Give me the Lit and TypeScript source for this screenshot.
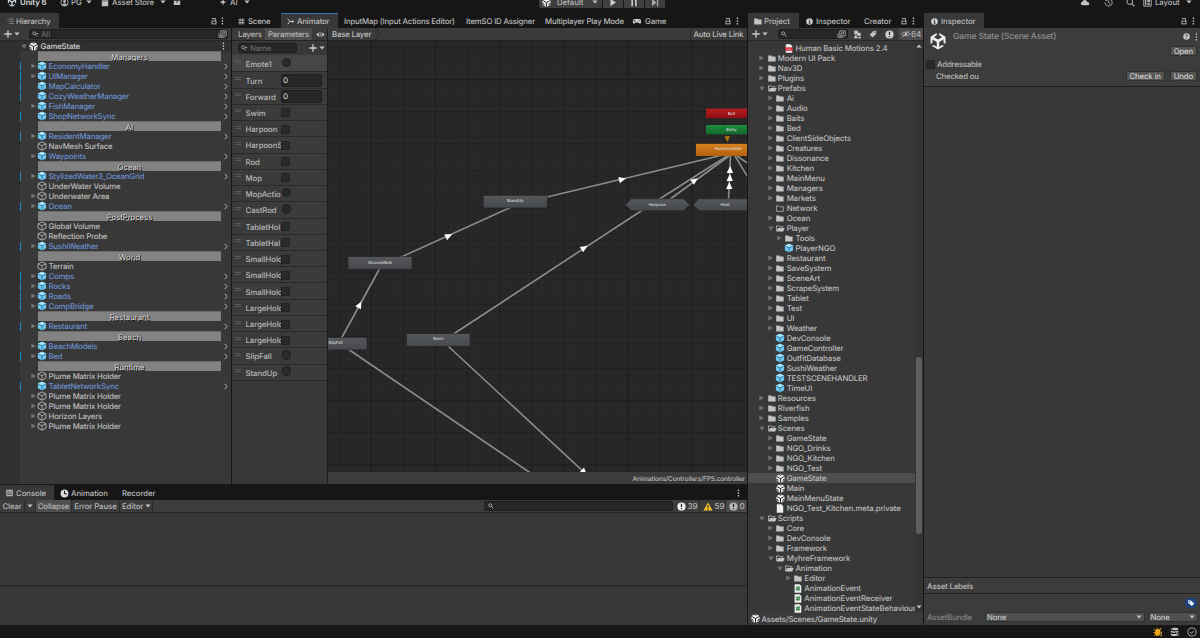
import { LitElement, html, svg, css, nothing } from "lit";
import { customElement } from "lit/decorators.js";

// ---------- icons ----------
const icon = (w: number, h: number, vb: string, body: unknown) =>
  html`<svg width=${w} height=${h} viewBox=${vb} fill="none">${body}</svg>`;

const caret = () => icon(6, 4, "0 0 6 4", svg`<path d="M0.4 0.4H5.6L3 3.5Z" fill="#c4c4c4"/>`);
const arrowR = () => icon(5, 6, "0 0 5 6", svg`<path d="M0.3 0.4L4.9 3L0.3 5.6Z" fill="#747474"/>`);
const arrowD = () => icon(6, 5, "0 0 6 5", svg`<path d="M0.2 0.5H5.8L3 4.9Z" fill="#6e6e6e"/>`);
const chevron = () => icon(4, 7, "0 0 4 7", svg`<path d="M0.7 0.8L3.2 3.5L0.7 6.2" stroke="#b4b4b4" stroke-width="1"/>`);
const dots = () => icon(3, 8, "0 0 3 8", svg`<path d="M0.8 0.6h1.3v1.4h-1.3zM0.8 3.3h1.3v1.4h-1.3zM0.8 6h1.3v1.4h-1.3z" fill="#c8c8c8"/>`);
const lock = () => icon(6, 8, "0 0 6 8", svg`<path d="M1.1 2.2V1.5H4.5V3.8" stroke="#b8b8b8" stroke-width="0.9"/><rect x="1" y="4" width="4" height="2.9" stroke="#b8b8b8" stroke-width="0.9"/>`);
const plus = () => icon(8, 8, "0 0 8 8", svg`<path d="M4 0.3V7.7M0.3 4H7.7" stroke="#cccccc" stroke-width="1.3"/>`);
const lens = () => icon(6, 6, "0 0 6 6", svg`<circle cx="2.3" cy="2.3" r="1.5" stroke="#b0b0b0" stroke-width="0.9"/><path d="M3.5 3.5L5.4 5.4" stroke="#b0b0b0" stroke-width="1"/>`);
const lensMenu = () => icon(7, 6, "0 0 7 6", svg`<circle cx="2.1" cy="2.3" r="1.4" stroke="#aaa" stroke-width="0.8"/><path d="M3.2 3.4L5 5.2" stroke="#aaa" stroke-width="0.9"/><path d="M3.9 1.9H6.5L5.2 3.4Z" fill="#aaa"/>`);
const popOut = () => icon(9, 8, "0 0 9 8", svg`<path d="M1 3.2V7.3H6.3M2.8 0.8H8.2V6H2.8Z" stroke="#b4b4b4" stroke-width="0.8"/><circle cx="5.6" cy="3.1" r="1.1" stroke="#b4b4b4" stroke-width="0.7"/><path d="M4.7 4L2.6 6" stroke="#b4b4b4" stroke-width="0.8"/>`);
const prefab = () => icon(10, 10, "0 0 10 10", svg`<path d="M5 0.7L9.1 2.6V7.3L5 9.4L0.9 7.3V2.6Z" fill="#6ccaf5"/><path d="M5 0.7L9.1 2.6L5 4.6L0.9 2.6Z" fill="#a8e6fd"/><path d="M1.3 3.1L5 4.9L8.7 3.1M5 4.9V9" stroke="#2f6684" stroke-width="0.8"/>`);
const cube = () => icon(10, 10, "0 0 10 10", svg`<path d="M5 0.9L8.9 2.8V7.2L5 9.2L1.1 7.2V2.8Z" stroke="#b9b9b9" stroke-width="0.9" stroke-linejoin="round"/><path d="M1.3 2.9L5 4.7L8.7 2.9M5 4.7V9" stroke="#b9b9b9" stroke-width="0.8"/>`);
const unity = (s: number, c = "#ededed") => icon(s, s, "0 0 20 20", svg`
  <path d="M8.6 1.2L1.7 5.2V13.2L3.9 12V8.2L8.6 11V16.3L5.3 14.4L3.3 15.6L10 19.4L16.7 15.6L14.7 14.4L11.4 16.3V11L16.1 8.2V12L18.3 13.2V5.2L11.4 1.2V3.7L14.7 5.6L10 8.4L5.3 5.6L8.6 3.7Z" fill=${c}/>`);
const sceneIcon = (s = 9) => icon(s, s, "0 0 9 9", svg`<circle cx="4.5" cy="4.5" r="4.1" fill="#f0f0f0"/><path d="M4.5 4.6V8.6M4.5 4.6L1.2 2.7M4.5 4.6L7.8 2.7" stroke="#262626" stroke-width="1"/><path d="M3.4 0.4L4.5 1.7L5.6 0.4M0.4 5.5L2 5.7L2 7.6M8.6 5.5L7 5.7L7 7.6" stroke="#262626" stroke-width="0.8"/>`);
const folder = () => icon(8, 7, "0 0 8 7", svg`<path d="M0.2 0.5H3.2L4.1 1.5H7.6V6.6H0.2Z" fill="#c4c4c4"/>`);
const folderEmpty = () => icon(8, 7, "0 0 8 7", svg`<path d="M0.6 0.8H3.1L4 1.8H7.3V6.3H0.6Z" stroke="#b4b4b4" stroke-width="0.8"/>`);
const folderOpen = () => icon(9, 7, "0 0 9 7", svg`<path d="M0.6 6V0.8H2.9L3.8 1.7H6.9V2.8" stroke="#c4c4c4" stroke-width="0.8"/><path d="M0.4 6.6L2 2.9H8.7L7.2 6.6Z" fill="#c4c4c4"/>`);
const csFile = () => icon(8, 9, "0 0 8 9", svg`<path d="M0.6 0.2H5.6L7.3 1.9V8.8H0.6Z" fill="#eeeeee"/><path d="M3.4 2.2L2.9 7M5.2 2.2L4.7 7M1.9 3.8H6M1.8 5.4H5.9" stroke="#2e7d44" stroke-width="0.9"/>`);
const plainFile = () => icon(8, 9, "0 0 8 9", svg`<path d="M0.8 0.3H5.3L7.2 2.1V8.7H0.8Z" fill="#f0f0f0"/>`);
const pdfFile = () => icon(8, 9, "0 0 8 9", svg`<path d="M0.8 0.3H5.3L7.2 2.1V8.7H0.8Z" fill="#f0f0f0"/><rect x="0.3" y="3.4" width="7.3" height="3.4" fill="#d0202c"/><path d="M1.5 5.2H6.4" stroke="#f3b5b8" stroke-width="0.8"/>`);
const listIcon = () => icon(7, 7, "0 0 7 7", svg`<path d="M0.4 1.1H1.4M2.2 1.1H6.7M1.5 3.3H2.4M3.1 3.3H6.7M1.5 5.5H2.4M3.1 5.5H6.7" stroke="#9a9a9a" stroke-width="0.8"/>`);
const hashIcon = () => icon(7, 7, "0 0 7 7", svg`<path d="M2.1 0.4V6.6M4.7 0.4V6.6M0.3 2.1H6.6M0.3 4.8H6.6" stroke="#b4b4b4" stroke-width="1"/>`);
const animatorIcon = () => icon(8, 7, "0 0 8 7", svg`<path d="M0.8 0.8L2.8 3.5L0.8 6.2M2.6 3.5H6.6" stroke="#c4c4c4" stroke-width="1"/><path d="M5 2L7.4 3.5L5 5Z" fill="#c4c4c4"/>`);
const gameIcon = () => icon(10, 7, "0 0 10 7", svg`<path d="M2.5 1H7.5C9.4 1 9.6 5.6 8 5.6C7.1 5.6 6.8 4.5 6.2 4.5H3.8C3.2 4.5 2.9 5.6 2 5.6C0.4 5.6 0.6 1 2.5 1Z" fill="#d4d4d4"/><path d="M2.8 1.9V3.7M1.9 2.8H3.7M6.3 2.8H8" stroke="#222" stroke-width="0.7"/>`);
const info = (s = 7) => icon(s, s, "0 0 8 8", svg`<circle cx="4" cy="4" r="3.7" fill="#d2d2d2"/><path d="M4 1.5V2.5M3.2 3.4H4.2V6H3.1M4 6H5" stroke="#222" stroke-width="1"/>`);
const bang = (s: number, c: string) => icon(s, s, "0 0 9 9", svg`<circle cx="4.5" cy="4.5" r="4.1" fill=${c}/><path d="M4.5 1.7V5.1M4.5 6V7.3" stroke="#2a2a2a" stroke-width="1.3"/>`);
const eye = () => icon(9, 7, "0 0 9 7", svg`<path d="M0.4 3.5C2 0.7 7 0.7 8.6 3.5C7 6.3 2 6.3 0.4 3.5Z" fill="#c8c8c8"/><circle cx="4.5" cy="3.5" r="1.7" fill="#3a3a3a"/><circle cx="4.5" cy="3.5" r="0.8" fill="#c8c8c8"/>`);
const eyeOff = () => icon(10, 8, "0 0 10 8", svg`<path d="M0.7 4C2.2 1.7 7.6 1.5 9 4C7.6 6.3 2.2 6.3 0.7 4Z" stroke="#b6b6b6" stroke-width="0.9"/><circle cx="4.9" cy="4" r="1.3" fill="#b6b6b6"/><path d="M1.5 7.2L8 0.7" stroke="#b6b6b6" stroke-width="1"/>`);
const shapes = () => icon(9, 9, "0 0 9 9", svg`<rect x="1.2" y="0.6" width="3.8" height="3.6" fill="#c4c4c4"/><circle cx="6" cy="4.3" r="1.9" fill="#c4c4c4"/><path d="M2.8 4.2L5 8.3H0.7Z" fill="#c4c4c4"/><path d="M5.2 6.9H8V8.4H5.2Z" fill="#c4c4c4"/>`);
const tag = (c: string) => icon(8, 8, "0 0 8 8", svg`<path d="M7.3 0.8L7.2 3.9L3.5 7.5L0.7 4.7L4.3 1Z" fill=${c}/><circle cx="5.9" cy="2.2" r="0.6" fill="#3a3a3a"/>`);
const blueTag = () => icon(12, 10, "0 0 12 10", svg`<rect x="0" y="0" width="12" height="10" rx="4.6" fill="#1d427c"/><path d="M2.9 2.3L5.9 2.4L9.3 5.6L6.9 7.9L3.3 4.9Z" fill="#e6edf8"/><circle cx="4.5" cy="3.8" r="0.6" fill="#1d427c"/>`);
const warn = () => icon(10, 9, "0 0 10 9", svg`<path d="M5 0.4L9.6 8.6H0.4Z" fill="#f5c12c"/><path d="M5 3V6M5 6.8V7.9" stroke="#30280c" stroke-width="1.1"/>`);
const consoleIcon = () => icon(7, 8, "0 0 7 8", svg`<rect x="0.3" y="0.7" width="6.4" height="6.6" rx="0.6" fill="#bdbdbd"/><path d="M1.2 2.4H3.4M1.2 4H5.8M1.2 5.6H5.8M4.4 2.4H5.8" stroke="#383838" stroke-width="0.8"/>`);
const clock = () => icon(9, 9, "0 0 9 9", svg`<circle cx="4.5" cy="4.5" r="3.9" fill="#d8d8d8"/><path d="M4.5 1.8V4.8H6.8" stroke="#1a1a1a" stroke-width="1"/>`);
const help = () => icon(7, 7, "0 0 8 8", svg`<circle cx="4" cy="4" r="3.7" fill="#c8c8c8"/><path d="M2.9 3.1C3 1.6 5.2 1.7 5.1 3.1C5 3.9 4 3.9 4 4.9M4 5.5V6.4" stroke="#333" stroke-width="0.9"/>`);
const userIcon = () => icon(9, 9, "0 0 9 9", svg`<circle cx="4.5" cy="4.5" r="3.7" stroke="#b8b8b8" stroke-width="0.9"/><circle cx="4.5" cy="3.5" r="1.4" fill="#b8b8b8"/><path d="M2.1 6.8C2.8 5.1 6.2 5.1 6.9 6.8L4.5 8Z" fill="#b8b8b8"/>`);
const storeIcon = () => icon(8, 10, "0 0 8 10", svg`<path d="M0.8 2.6H7.2V9.2H0.8Z" fill="#c0c0c0"/><path d="M0.8 3.9H7.2" stroke="#222" stroke-width="0.6"/>`);
const boxIcon = () => icon(8, 8, "0 0 8 8", svg`<rect x="0.8" y="0.5" width="6.4" height="6.5" rx="0.6" fill="#c0c0c0"/><path d="M0.8 2.4H7.2M3 3.8H5" stroke="#222" stroke-width="0.9"/>`);
const sparkle = () => icon(8, 8, "0 0 8 8", svg`<path d="M4 0.8L4.8 3.3L7.4 4.1L4.8 4.9L4 7.4L3.2 4.9L0.6 4.1L3.2 3.3Z" fill="#c8c8c8"/>`);
const cloud = () => icon(10, 8, "0 0 10 8", svg`<path d="M2.6 7.2C0.3 7.2 0.2 4.3 2.3 4.1C2.4 1.5 6.6 1.2 7.2 3.9C9.9 3.8 10 7.2 7.6 7.2Z" fill="#c4c4c4"/>`);
const history = () => icon(9, 9, "0 0 9 9", svg`<path d="M1 4.5A3.6 3.6 0 1 0 2.2 1.8M1.1 0.9L1.7 2.6L3.4 2.3M4.6 2.5V4.8L6.2 5.7" stroke="#b8b8b8" stroke-width="0.9"/>`);
const bigLens = () => icon(9, 9, "0 0 9 9", svg`<circle cx="3.8" cy="3.6" r="2.8" stroke="#b8b8b8" stroke-width="1"/><path d="M5.8 5.7L8.4 8.4" stroke="#b8b8b8" stroke-width="1.2"/>`);
const layoutIcon = () => icon(9, 9, "0 0 9 9", svg`<path d="M0.8 0.8H8.2V8.2H0.8Z" stroke="#b8b8b8" stroke-width="0.9"/><path d="M2.1 2H3.4V7H2.1ZM4.4 2H6.9V4.2H4.4ZM4.4 5.2H6.9V7H4.4Z" fill="#b8b8b8"/>`);
const play = () => icon(8, 9, "0 0 8 9", svg`<path d="M1.4 0.8L7 4.5L1.4 8.2Z" fill="#c6c6c6"/>`);
const pause = () => icon(8, 9, "0 0 8 9", svg`<path d="M1.3 0.6H3V8.3H1.3ZM5 0.6H6.7V8.3H5Z" fill="#c6c6c6"/>`);
const step = () => icon(8, 9, "0 0 8 9", svg`<path d="M1 0.8L5.6 4.5L1 8.2ZM5.9 0.8H7.2V8.2H5.9Z" fill="#a8a8a8"/>`);
const bug = () => icon(10, 10, "0 0 10 10", svg`<path d="M2.5 3.4C3 1.6 5.3 1.8 5.9 2.6L7.8 0.9L8.4 1.6L7.3 3.3L6.6 8.6L3.4 9L2 6.8Z" fill="#f0a818"/><path d="M0.8 2.2L3 4.2M0.4 5.6H3M1 8.8L3.1 7M4 0.7L4.6 2.4" stroke="#f0a818" stroke-width="0.9"/><path d="M8.1 4.4V7.4M8.1 8.1V9.2" stroke="#f6d060" stroke-width="1.1"/>`);
const dbIcon = () => icon(10, 10, "0 0 10 10", svg`<ellipse cx="4.6" cy="2" rx="3.8" ry="1.3" fill="#c6c6c6"/><path d="M0.8 3.4C2 4.6 7.2 4.6 8.4 3.4V5C7.2 6.2 2 6.2 0.8 5ZM0.8 6.2C2 7.4 7.2 7.4 8.4 6.2V8C7.2 9.4 2 9.4 0.8 8Z" fill="#c6c6c6"/><path d="M5.5 5L9 8.8" stroke="#c6c6c6" stroke-width="1"/><path d="M1 1L8.8 9" stroke="#191919" stroke-width="0.7"/>`);
const okIcon = () => icon(10, 10, "0 0 10 10", svg`<circle cx="5" cy="5" r="4.1" stroke="#b0b0b0" stroke-width="0.9"/><path d="M3 5L4.5 6.4L7 3.7" stroke="#b0b0b0" stroke-width="1"/>`);

const base = css`
  :host { display: block; min-width: 0; min-height: 0; }
  * { box-sizing: border-box; }
  svg { display: block; flex: none; }
  .row { display: flex; align-items: center; }
  .grow { flex: 1; min-width: 0; }
  .tabs { height: 15px; background: #161616; display: grid; align-items: stretch; }
  .tab { display: flex; align-items: center; gap: 3px; padding: 1px 0 0 7px; overflow: visible; white-space: nowrap; color: #bababa; }
  .tab.on { background: #383838; }
  .field { background: #262626; border: 1px solid #1e1e1e; border-radius: 2px; display: flex; align-items: center; }
`;

// ---------- top toolbar ----------
@customElement("main-toolbar")
class MainToolbar extends LitElement {
  static styles = [base, css`
    :host { height: 13px; overflow: hidden; background: #161616; color: #b8b8b8; letter-spacing: -0.08px; }
    .bar { height: 16px; margin-top: -6px; display: grid; align-items: center;
      grid-template-columns: 7px 53px 41px 72px 46px 276px 44px 63px 1px 20px 1px 20px 1px 20px 415px 24px 22px 17px 12px 1fr; }
    .bar > * { display: flex; align-items: center; gap: 3px; white-space: nowrap; }
    .ver { color: #dedede; font-weight: 600; gap: 3px; }
    .btn { height: 12px; background: #3f3f3f; justify-content: center; }
    .first { padding-left: 3px; border-radius: 2px; justify-content: flex-start; }
    .user { gap: 2px; }
    .def { width: 32px; padding-left: 3px; }
  `];
  render() {
    return html`<div class="bar">
      <span></span>
      <span class="ver">${unity(10, "#c9d3dc")}Unity 6</span>
      <span class="user">${userIcon()}PG<span></span>${caret()}</span>
      <span>${storeIcon()}Asset Store<span></span>${caret()}</span>
      <span>${boxIcon()}</span>
      <span>${sparkle()}AI<span></span>${caret()}</span>
      <span></span>
      <span class="btn first">${sceneIcon(9)}<span class="def">Default</span><span></span>${caret()}</span>
      <span></span><span class="btn">${play()}</span>
      <span></span><span class="btn">${pause()}</span>
      <span></span><span class="btn">${step()}</span>
      <span></span>
      <span>${cloud()}</span><span>${history()}</span><span>${bigLens()}</span>
      <span>${layoutIcon()}</span><span>Layout<span></span>${caret()}</span>
    </div>`;
  }
}

// ---------- hierarchy ----------
type HRow = { n: string; k: "sep" | "pre" | "obj"; a?: boolean; m?: boolean };
const sep = (n: string): HRow => ({ n, k: "sep" });
const pre = (n: string, a = true, m = true): HRow => ({ n, k: "pre", a, m });
const obj = (n: string, a = false): HRow => ({ n, k: "obj", a });
const hierarchy: HRow[] = [
  sep("Managers"), pre("EconomyHandler"), pre("UIManager"), pre("MapCalculator", false), pre("CozyWeatherManager", false),
  pre("FishManager", true, false), pre("ShopNetworkSync", false),
  sep("AI"), pre("ResidentManager"), obj("NavMesh Surface"), pre("Waypoints", true, false),
  sep("Ocean"), pre("StylizedWater3_OceanGrid"), obj("UnderWater Volume"), obj("Underwater Area", true), pre("Ocean"),
  sep("PostProcess"), obj("Global Volume"), obj("Reflection Probe"), pre("SushiWeather"),
  sep("World"), obj("Terrain"), pre("Comps"), pre("Rocks"), pre("Roads"), pre("CompBridge"),
  sep("Restaurant"), pre("Restaurant"),
  sep("Beach"), pre("BeachModels", true, false), pre("Bed"),
  sep("Runtime"), obj("Plume Matrix Holder", true), pre("TabletNetworkSync", false), obj("Plume Matrix Holder", true),
  obj("Plume Matrix Holder", true), obj("Horizon Layers", true), obj("Plume Matrix Holder", true),
];

@customElement("hierarchy-panel")
class HierarchyPanel extends LitElement {
  static styles = [base, css`
    :host { background: #383838; display: flex; flex-direction: column; }
    .tabs { grid-template-columns: 59px 1fr 10px 10px; }
    .tabs .on { gap: 2px; }
    .tool { height: 13px; padding: 0 3px 0 4px; gap: 2px; background: #3a3a3a; border-bottom: 1px solid #282828; }
    .tool .field { height: 10px; flex: 1; margin-left: 7px; padding-left: 2px; gap: 2px; color: #686868; }
    .body { flex: 1; background: linear-gradient(to right, #303030 0 20px, #383838 20px); }
    .line { height: 10px; display: grid; grid-template-columns: 20px 10px 7px 11px 1fr 7px; align-items: center; }
    .line > * { white-space: nowrap; }
    .mark { grid-column: 1; justify-self: end; width: 1px; height: 9px; margin-right: -1px; background: #1e88c4; }
    .arr { grid-column: 3; margin-left: 0.5px; }
    .ic { grid-column: 4; }
    .nm { grid-column: 5; margin-left: 0.5px; }
    .go { grid-column: 6; }
    .pre .nm { color: #6c8fce; }
    .line.root { grid-template-columns: 21px 8px 11.5px 1fr 9px; background: #2f2f2f; color: #cecece; }
    .sep { height: 10px; margin: 0 10px 0 38px; background: #828282; border-top: 1px solid #6b6b6b; text-align: center; line-height: 11px; overflow: hidden; color: #dadada; letter-spacing: -0.08px; text-shadow: 0.8px 0.8px 0.3px #0a0a0a, 0.4px 0.4px 0.4px #0a0a0a; }
  `];
  render() {
    return html`
      <div class="tabs"><div class="tab on">${listIcon()}Hierarchy</div><span></span><div class="row">${lock()}</div><div class="row">${dots()}</div></div>
      <div class="tool row">${plus()}${caret()}<div class="field">${lensMenu()}All<span class="grow"></span>${popOut()}</div></div>
      <div class="body">
        <div class="line root"><span></span>${arrowD()}${sceneIcon()}<span>GameState</span>${dots()}</div>
        ${hierarchy.map((r) => r.k === "sep"
          ? html`<div class="sep">${r.n}</div>`
          : html`<div class="line ${r.k}">
              ${r.m ? html`<span class="mark"></span>` : nothing}
              ${r.a ? html`<span class="arr">${arrowR()}</span>` : nothing}
              <span class="ic">${r.k === "pre" ? prefab() : cube()}</span><span class="nm">${r.n}</span>
              ${r.k === "pre" ? html`<span class="go">${chevron()}</span>` : nothing}
            </div>`)}
      </div>`;
  }
}

// ---------- animator ----------
const params: [string, "t" | "f" | "b"][] = [
  ["Emote1", "t"], ["Turn", "f"], ["Forward", "f"], ["Swim", "b"], ["Harpoon", "b"], ["HarpoonS", "b"], ["Rod", "b"], ["Mop", "b"],
  ["MopActio", "t"], ["CastRod", "t"], ["TabletHol", "b"], ["TabletHal", "b"], ["SmallHolc", "b"], ["SmallHolc", "b"], ["SmallHolc", "b"],
  ["LargeHolc", "b"], ["LargeHolc", "b"], ["LargeHolc", "b"], ["SlipFall", "t"], ["StandUp", "t"],
];
// Transitions in window coordinates: x1, y1, x2, y2.
const links = [
  [341, 339, 380, 268], [399, 258, 516, 205], [547, 197, 727, 154], [452, 335, 644, 209],
  [658, 200, 727, 156], [669, 200, 729, 156], [728.5, 200, 730.5, 156], [735, 156, 752, 184], [737, 156, 752, 166],
  [348, 349, 532, 474], [448, 346, 586, 474],
];
const heads = [[359.5, 305, -62], [448.5, 236, -24], [622, 179.5, -13], [584, 248, -33], [694.5, 180.5, -36], [730, 170, -88], [729.8, 178, -88], [729.3, 186, -88], [584, 472, 43]];

@customElement("animator-panel")
class AnimatorPanel extends LitElement {
  static styles = [base, css`
    :host { background: #383838; display: flex; flex-direction: column; }
    .tabs { grid-template-columns: 49px 57px 128px 79px 81px 99px 10.5px 10px; }
    .tabs .on { border-top: 1px solid #3a79bb; padding-top: 0; gap: 2px; }
    .tabs .flush { padding-left: 6px; }
    .tabs .after { padding-left: 0; }
    .split { flex: 1; display: grid; grid-template-columns: 95px 1fr; min-height: 0; }
    .side { border-right: 1px solid #1d1d1d; width: 96px; }
    .sub { height: 13px; background: #3a3a3a; border-bottom: 1px solid #242424; color: #b8b8b8; }
    .sub .lay { width: 33px; padding-left: 6px; }
    .sub .par { width: 47px; height: 12px; background: #4d4d4d; justify-content: center; margin-right: 3.5px; }
    .find { height: 14px; padding-left: 6px; }
    .find .field { width: 59px; height: 10px; gap: 2px; padding-left: 2px; color: #666; margin-right: 12px; }
    .p { height: 16.24px; padding-top: 1px; border-bottom: 1px solid #2a2a2a; display: grid; grid-template-columns: 13.5px 35px 1fr; align-items: center; color: #b8b8b8; background: #3b3b3b; }
    .p.first { background: #464646; height: 17.4px; padding-top: 1.6px; }
    .grip { width: 5.5px; height: 3px; margin: -4px 0 0 3px; border-top: 1px solid #5a5a5a; border-bottom: 1px solid #5a5a5a; }
    .lbl { overflow: hidden; white-space: nowrap; letter-spacing: -0.06px; }
    .bool { width: 9px; height: 9px; background: #2a2a2a; border: 1px solid #222; border-radius: 1px; margin-left: 0.5px; }
    .trig { width: 9.5px; height: 9.5px; border-radius: 50%; background: #2a2a2a; border: 1px solid #1f1f1f; margin: -3px 0 0 1px; }
    .num { height: 13px; margin: -1px 5px 0 0; padding-left: 1.5px; color: #c4c4c4; }
    .graph { display: flex; flex-direction: column; min-width: 0; margin-left: 1px; }
    .crumb { height: 13px; background: #3a3a3a; border-bottom: 1px solid #242424; color: #c0c0c0; padding-left: 4px; gap: 3px; }
    .live { border-left: 1px solid #2a2a2a; padding-left: 2.5px; width: 57px; height: 12px; white-space: nowrap; }
    .canvas { flex: 1; min-height: 0; overflow: hidden; background: #282828; }
    .foot { height: 12px; background: #3c3c3c; justify-content: flex-end; padding: 1px 2px 0 0; font-size: 6.5px; font-weight: 500; color: #bcbcbc; letter-spacing: -0.14px; }
    .canvas text { font-size: 4.1px; font-weight: 500; fill: #dcdcdc; text-anchor: middle; letter-spacing: 0; }
  `];
  node(x: number, y: number, w: number, label: string, f = "url(#gray)") {
    return svg`<rect x=${x} y=${y} width=${w} height="12.6" fill=${f} stroke="#1e1e1e" stroke-width="0.5"/><text x=${x + w / 2} y=${y + 6.8}>${label}</text>`;
  }
  hex(x: number, label: string) {
    return svg`<path d="M${x} 204.7L${x + 6} 198.7H${x + 58}L${x + 64.5} 204.7L${x + 58} 210.8H${x + 6}Z" fill="url(#gray)" stroke="#1e1e1e" stroke-width="0.5"/><text x=${x + 32} y="206.4">${label}</text>`;
  }
  render() {
    return html`
      <div class="tabs">
        <div class="tab flush">${hashIcon()}Scene</div><div class="tab on flush">${animatorIcon()}Animator</div>
        <div class="tab flush">InputMap (Input Actions Editor)</div><div class="tab after">ItemSO ID Assigner</div>
        <div class="tab after">Multiplayer Play Mode</div><div class="tab flush">${gameIcon()}Game</div>
        <div class="row">${lock()}</div><div class="row">${dots()}</div>
      </div>
      <div class="split">
        <div class="side">
          <div class="sub row"><span class="lay">Layers</span><span class="par row">Parameters</span>${eye()}</div>
          <div class="find row"><div class="field">${lensMenu()}Name</div>${plus()}<span style="width:2px"></span>${caret()}</div>
          <div class="list">
            ${params.map(([n, k], i) => html`<div class="p ${i ? "" : "first"}"><span class="grip"></span><span class="lbl">${n}</span>
              ${k === "b" ? html`<span class="bool"></span>` : k === "t" ? html`<span class="trig"></span>` : html`<span class="num field">0</span>`}</div>`)}
          </div>
        </div>
        <div class="graph">
          <div class="crumb row"><span>Base Layer</span>${icon(8, 12, "0 0 8 12", svg`<path d="M1 0L6 6L1 12" stroke="#2a2a2a" stroke-width="1"/>`)}<span class="grow"></span><span class="live row">Auto Live Link</span></div>
          <div class="canvas"><svg width="419" height="431" viewBox="328 41 419 431">
            <defs>
              <pattern id="minor" x="370.8" y="47.3" width="6.42" height="6.42" patternUnits="userSpaceOnUse"><path d="M0 0.4H6.42M0.4 0V6.42" stroke="#232323" stroke-width="0.7"/></pattern>
              <pattern id="major" x="370.6" y="46.9" width="64.2" height="32.1" patternUnits="userSpaceOnUse"><path d="M0 0.5H64.2" stroke="#1e1e1e" stroke-width="0.9"/><path d="M0.6 0V32.1" stroke="#1a1a1a" stroke-width="1"/><path d="M32.6 0V32.1" stroke="#202020" stroke-width="0.8"/></pattern>
              <linearGradient id="gray" x2="0" y2="1"><stop stop-color="#55575b"/><stop offset="1" stop-color="#45484c"/></linearGradient>
              <linearGradient id="red" x2="0" y2="1"><stop stop-color="#b81c20"/><stop offset="1" stop-color="#8e1014"/></linearGradient>
              <linearGradient id="green" x2="0" y2="1"><stop stop-color="#1f8a40"/><stop offset="1" stop-color="#136a2c"/></linearGradient>
              <linearGradient id="orange" x2="0" y2="1"><stop stop-color="#d8811f"/><stop offset="1" stop-color="#b4600c"/></linearGradient>
            </defs>
            <rect x="328" y="41" width="419" height="431" fill="url(#minor)"/>
            <rect x="328" y="41" width="419" height="431" fill="url(#major)"/>
            ${links.map(([a, b, c, d]) => svg`<path d="M${a} ${b}L${c} ${d}" stroke="#8c8c8c" stroke-width="1.6"/>`)}
            ${heads.map(([x, y, r]) => svg`<path d="M-3 -3.2L4 0L-3 3.2Z" fill="#fff" transform="translate(${x} ${y}) rotate(${r})"/>`)}
            ${this.node(303, 337.3, 64, "")}<text x="335.5" y="344.1">SlipFall</text>
            ${this.node(406.5, 333.6, 63.5, "Swim")}
            ${this.node(348, 256.7, 64, "GroundWalk")}
            ${this.node(483.2, 195.3, 64, "StandUp")}
            ${this.hex(625.3, "Harpoon")}${this.hex(693, "Hold")}
            <rect x="706" y="108.6" width="50" height="9.6" fill="url(#red)"/><text x="731.5" y="115">Exit</text>
            <rect x="706" y="125" width="50" height="9.4" fill="url(#green)"/><text x="731.5" y="131.2">Entry</text>
            <path d="M724.5 136.3H730L727.4 142Z" fill="#b4780c"/>
            <rect x="696" y="143.8" width="64" height="12.2" fill="url(#orange)"/><text x="728.3" y="150.2">HumanoidIdle</text>
          </svg></div>
          <div class="foot row">Animations/Controllers/FPS.controller</div>
        </div>
      </div>`;
  }
}

// ---------- console ----------
@customElement("console-panel")
class ConsolePanel extends LitElement {
  static styles = [base, css`
    :host { background: #383838; border-top: 1px solid #161616; }
    .tabs { grid-template-columns: 54px 61px 622px 10px; letter-spacing: -0.08px; }
    .tabs .tight { padding-left: 6px; }
    .tabs .clk { gap: 2px; }
    .tool { height: 13px; background: #3c3c3c; border-bottom: 1px solid #262626; color: #b8b8b8; letter-spacing: -0.1px; }
    .tool > * { height: 12px; display: flex; align-items: center; white-space: nowrap; border-right: 1px solid #2c2c2c; }
    .clear { width: 25px; padding-left: 2.5px; }
    .drop { width: 11px; justify-content: center; }
    .col { width: 36px; background: #4f4f4f; justify-content: center; }
    .err { width: 48px; justify-content: center; }
    .ed { width: 33px; padding-left: 2px; gap: 1.5px; }
    .mid { flex: 1; border: 0; }
    .tool .field { width: 189px; height: 10px; padding-left: 3px; border: 1px solid #1e1e1e; }
    .n { padding-left: 3px; gap: 1.5px; font-size: 8.2px; }
    .n1 { width: 26px; margin-left: 1px; } .n2 { width: 26px; } .n3 { width: 20px; background: #4b4b4b; }
    .tool .n3 { border: 0; margin-right: 1px; }
    .log { height: 73px; border-bottom: 1px solid #2a2a2a; box-shadow: 0 1px 0 #303030; }
  `];
  render() {
    return html`
      <div class="tabs"><div class="tab on tight">${consoleIcon()}Console</div><div class="tab tight clk">${clock()}Animation</div><div class="tab">Recorder</div><div class="row">${dots()}</div></div>
      <div class="tool row"><span class="clear">Clear</span><span class="drop">${caret()}</span><span class="col">Collapse</span><span class="err">Error Pause</span><span class="ed">Editor${caret()}</span><span class="mid"></span>
        <span class="field">${lens()}</span><span class="n n1">${bang(9, "#f2f2f2")}39</span><span class="n n2">${warn()}59</span><span class="n n3">${bang(9, "#b8b8b8")}0</span></div>
      <div class="log"></div>`;
  }
}

// ---------- project ----------
// Depth, state ("c" closed, "o" open, "" leaf), icon kind, label.
type PRow = [number, string, string, string];
const f1 = (...n: string[]): PRow[] => n.map((x) => [1, "c", "f", x]);
const p1 = (...n: string[]): PRow[] => n.map((x) => [1, "", "p", x]);
const project: PRow[] = [
  [2, "", "pdf", "Human Basic Motions 2.4"], [0, "c", "f", "Modern UI Pack"], [0, "c", "f", "Nav3D"], [0, "c", "f", "Plugins"], [0, "o", "o", "Prefabs"],
  ...f1("Ai", "Audio", "Baits", "Bed", "ClientSideObjects", "Creatures", "Dissonance", "Kitchen", "MainMenu", "Managers", "Markets"),
  [1, "", "e", "Network"], ...f1("Ocean"), [1, "o", "o", "Player"], [2, "c", "f", "Tools"], [2, "", "p", "PlayerNGO"],
  ...f1("Restaurant", "SaveSystem", "SceneArt", "ScrapeSystem", "Tablet", "Test", "UI", "Weather"),
  ...p1("DevConsole", "GameController", "OutfitDatabase", "SushiWeather", "TESTSCENEHANDLER", "TimeUI"),
  [0, "c", "f", "Resources"], [0, "c", "f", "Riverfish"], [0, "c", "f", "Samples"], [0, "o", "o", "Scenes"],
  ...f1("GameState", "NGO_Drinks", "NGO_Kitchen", "NGO_Test"),
  [1, "sel", "s", "GameState"], [1, "", "s", "Main"], [1, "", "s", "MainMenuState"], [1, "", "d", "NGO_Test_Kitchen.meta.private"],
  [0, "o", "o", "Scripts"], ...f1("Core", "DevConsole", "Framework"), [1, "o", "o", "MyhreFramework"], [2, "o", "o", "Animation"], [3, "c", "f", "Editor"],
  [3, "", "cs", "AnimationEvent"], [3, "", "cs", "AnimationEventReceiver"], [3, "", "cs", "AnimationEventStateBehaviour"],
];
const kinds: Record<string, () => unknown> = { f: folder, o: folderOpen, e: folderEmpty, p: prefab, s: () => sceneIcon(9), d: plainFile, cs: csFile, pdf: pdfFile };

@customElement("project-panel")
class ProjectPanel extends LitElement {
  static styles = [base, css`
    :host { background: #383838; display: flex; flex-direction: column; }
    .tabs { grid-template-columns: 51px 58px 43.5px 11px 10px; letter-spacing: -0.08px; }
    .tabs .on { padding-left: 6px; gap: 2px; }
    .tool { height: 13px; background: #3a3a3a; border-bottom: 1px solid #282828; padding-left: 4px; color: #b0b0b0; }
    .tool .field { width: 70px; height: 10px; margin: 0 5px 0 10px; padding: 0 1px 0 2px; }
    .hid { height: 12px; width: 24px; background: #4b4b4b; padding-left: 2px; font-size: 8.2px; margin-left: auto; }
    .g { width: 16px; }
    .main { flex: 1; display: grid; grid-template-columns: 1fr 8px; min-height: 0; }
    .tree { padding-top: 2px; min-width: 0; letter-spacing: -0.14px; }
    .line { height: 10px; display: grid; grid-template-columns: 8.3px 10.2px 1fr; align-items: center; white-space: nowrap; }
    .sel { background: #4d4d4d; }
    .pf { margin-left: -1px; }
    .bar { background: #343434; display: flex; flex-direction: column; align-items: center; padding: 3px 1px 4px; }
    .thumb { width: 6px; height: 177px; border-radius: 3px; background: #5e5e5e; margin-top: 309px; margin-bottom: auto; }
    .path { height: 12px; background: #3c3c3c; padding: 0 0 1px 3px; gap: 1.5px; }
    .up { transform: scaleY(-1); }
  `];
  render() {
    return html`
      <div class="tabs"><div class="tab on">${folder()}Project</div><div class="tab">${info()}Inspector</div><div class="tab">Creator</div><div class="row">${lock()}</div><div class="row">${dots()}</div></div>
      <div class="tool row">${plus()}<span style="width:2px"></span>${caret()}<div class="field">${lens()}<span class="grow"></span>${popOut()}</div>
        <span class="g">${shapes()}</span><span class="g">${tag("#c4c4c4")}</span><span>${bang(9, "#d0d0d0")}</span><span class="hid row">${eyeOff()}64</span></div>
      <div class="main">
        <div class="tree">${project.map(([d, s, k, n]) => html`<div class="line ${s === "sel" ? "sel" : ""}" style="padding-left:${11.3 + d * 8.85}px">
          <span>${s === "c" ? arrowR() : s === "o" ? arrowD() : nothing}</span><span class=${k === "p" ? "pf" : ""}>${kinds[k]()}</span><span>${n}</span></div>`)}</div>
        <div class="bar"><span class="up">${caret()}</span><span class="thumb"></span>${caret()}</div>
      </div>
      <div class="path row">${sceneIcon()}<span>Assets/Scenes/GameState.unity</span></div>`;
  }
}

// ---------- inspector ----------
@customElement("inspector-panel")
class InspectorPanel extends LitElement {
  static styles = [base, css`
    :host { background: #383838; display: flex; flex-direction: column; }
    .tabs { grid-template-columns: 60px 1fr 11px 8px; letter-spacing: -0.08px; }
    .head { height: 59px; background: #3c3c3c; border-bottom: 1px solid #1f1f1f; display: grid; grid-template-columns: 29px 1fr auto; grid-template-rows: 17px 12px 14px 10px; align-items: center; }
    .logo { grid-row: 1 / 3; align-self: start; padding: 4px 0 0 5px; }
    .title { font-size: 8.6px; color: #8f8f8f; }
    .acts { display: flex; gap: 5px; padding-right: 3px; justify-content: flex-end; }
    .mini { display: flex; gap: 5px; align-items: center; justify-content: flex-end; padding-right: 2px; }
    .btn { height: 10px; padding: 0 3px; background: #555; border: 1px solid #303030; border-radius: 2px; color: #d0d0d0; display: flex; align-items: center; justify-content: center; }
    .wide { grid-column: 1 / 3; color: #b8b8b8; display: flex; align-items: center; gap: 2px; padding-left: 2px; }
    .wide.in { padding-left: 12px; }
    .box { width: 9px; height: 9px; background: #2a2a2a; border: 1px solid #222; border-radius: 1px; }
    .labels { height: 17px; border: 1px solid #222; border-width: 1px 0; background: #3c3c3c; padding-left: 3px; font-weight: 600; color: #b0b0b0; }
    .foot { height: 31px; background: #3c3c3c; }
    .tags { height: 17px; justify-content: flex-end; padding-right: 3px; }
    .bundle { display: grid; grid-template-columns: 54px 160px 50px; column-gap: 3.5px; height: 12px; align-items: center; color: #858585; padding-left: 3px; }
    .dd { height: 10px; background: #505050; border: 1px solid #303030; border-radius: 2px; color: #c4c4c4; display: flex; align-items: center; justify-content: space-between; padding: 0 2px 0 1.5px; }
  `];
  render() {
    return html`
      <div class="tabs"><div class="tab on">${info()}Inspector</div><span></span><div class="row">${lock()}</div><div class="row">${dots()}</div></div>
      <div class="head">
        <span class="logo">${unity(18)}</span><span class="title">Game State (Scene Asset)</span><span class="mini">${help()}${dots()}</span>
        <span></span><span class="acts"><span class="btn">Open</span></span>
        <span class="wide"><span class="box"></span>Addressable</span><span></span>
        <span class="wide in">Checked ou</span><span class="acts"><span class="btn">Check in</span><span class="btn">Undo</span></span>
      </div>
      <div class="grow"></div>
      <div class="labels row">Asset Labels</div>
      <div class="foot"><div class="tags row">${blueTag()}</div>
        <div class="bundle"><span>AssetBundle</span><span class="dd">None${caret()}</span><span class="dd">None${caret()}</span></div></div>`;
  }
}

@customElement("app-root")
class AppRoot extends LitElement {
  static styles = [base, css`
    :host { width: 1200px; height: 638px; overflow: hidden; background: #161616; font: 450 7.8px/10px Inter, "Noto Sans", sans-serif; color: #bcbcbc; text-rendering: geometricPrecision; letter-spacing: -0.18px; }
    .work { height: 612px; display: grid; grid-template-columns: 747px 175px 276px; column-gap: 1px; }
    .left { display: grid; grid-template-rows: 471px 141px; min-width: 0; }
    .upper { display: grid; grid-template-columns: 231px 515px; column-gap: 1px; min-height: 0; }
    .status { height: 13px; display: flex; align-items: center; justify-content: flex-end; gap: 7px; padding-right: 3px; background: #171717; }
  `];
  render() {
    return html`<main-toolbar></main-toolbar>
      <div class="work">
        <div class="left"><div class="upper"><hierarchy-panel></hierarchy-panel><animator-panel></animator-panel></div><console-panel></console-panel></div>
        <project-panel></project-panel><inspector-panel></inspector-panel>
      </div>
      <div class="status">${bug()}${dbIcon()}${okIcon()}</div>`;
  }
}
